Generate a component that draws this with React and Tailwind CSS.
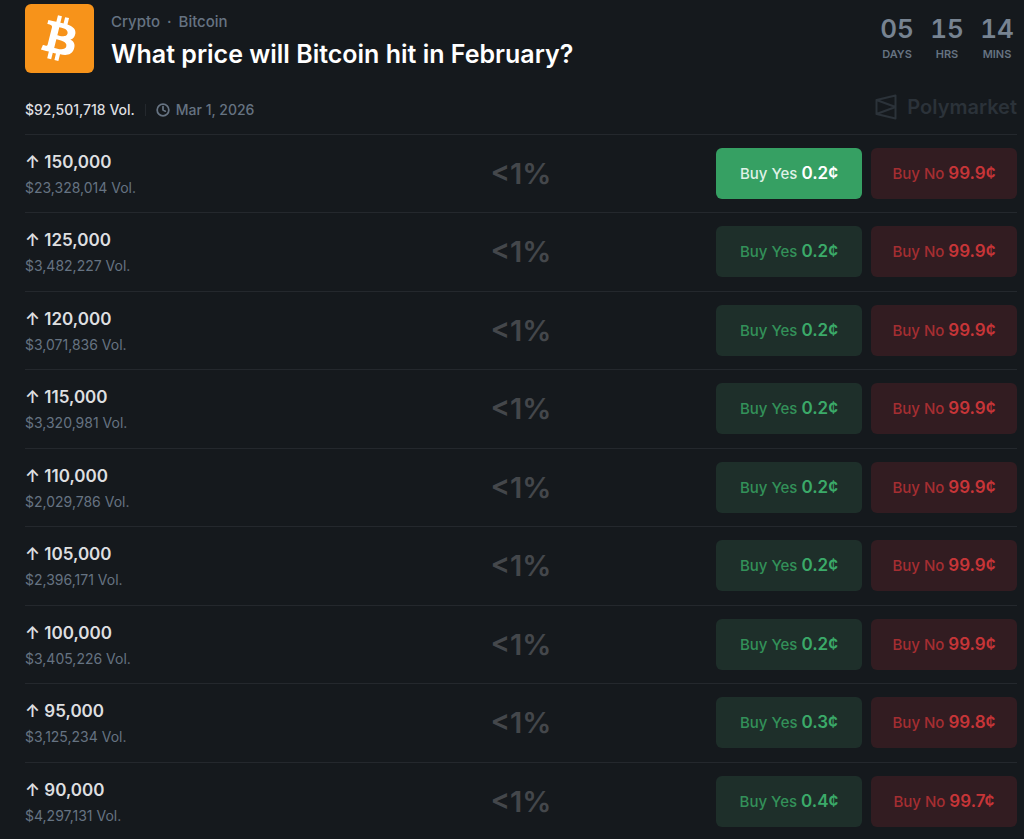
import { Clock } from 'lucide-react';

const countdown = [
  { label: 'Days', value: '05' },
  { label: 'Hrs', value: '15' },
  { label: 'Mins', value: '14' },
];

const outcomes = [
  { target: '150,000', volume: '$23,328,014', yes: '0.2¢', no: '99.9¢', selected: true },
  { target: '125,000', volume: '$3,482,227', yes: '0.2¢', no: '99.9¢' },
  { target: '120,000', volume: '$3,071,836', yes: '0.2¢', no: '99.9¢' },
  { target: '115,000', volume: '$3,320,981', yes: '0.2¢', no: '99.9¢' },
  { target: '110,000', volume: '$2,029,786', yes: '0.2¢', no: '99.9¢' },
  { target: '105,000', volume: '$2,396,171', yes: '0.2¢', no: '99.9¢' },
  { target: '100,000', volume: '$3,405,226', yes: '0.2¢', no: '99.9¢' },
  { target: '95,000', volume: '$3,125,234', yes: '0.3¢', no: '99.8¢' },
  { target: '90,000', volume: '$4,297,131', yes: '0.4¢', no: '99.7¢' },
];

const BitcoinLogo = () => (
  <svg viewBox="0.5 0.4 23 23" className="size-[69px] shrink-0 rounded-md bg-[#f7931a]" aria-hidden="true">
    <path
      fill="#fff"
      d="M17.288 10.291c.24-1.59-.974-2.45-2.64-3.03l.54-2.153-1.315-.33-.525 2.107c-.345-.087-.705-.167-1.064-.25l.526-2.127-1.32-.33-.54 2.165c-.285-.067-.565-.132-.84-.2l-1.815-.45-.35 1.407s.975.225.955.236c.535.136.63.486.615.766l-1.477 5.92c-.075.166-.24.406-.614.314.015.02-.96-.24-.96-.24l-.66 1.51 1.71.426.93.242-.54 2.19 1.32.327.54-2.17c.36.1.705.19 1.05.273l-.51 2.154 1.32.33.545-2.19c2.24.427 3.93.257 4.64-1.774.57-1.637-.03-2.58-1.217-3.196.854-.193 1.5-.76 1.68-1.93h.01zm-3.01 4.22c-.404 1.64-3.157.75-4.05.53l.72-2.9c.896.23 3.757.67 3.33 2.37zm.41-4.24c-.37 1.49-2.662.735-3.405.55l.654-2.64c.744.18 3.137.524 2.75 2.084v.006z"
    />
  </svg>
);

const PolymarketLogo = () => (
  <svg viewBox="0 0 22 26" className="h-[26px] w-[22px]" fill="none" stroke="currentColor" strokeWidth="2" strokeLinejoin="round" aria-hidden="true">
    <path d="M1.5 6 20.5 1.5v23L1.5 20zM1.5 6 20.5 13 1.5 20" />
  </svg>
);

const OutcomeRow = ({ target, volume, yes, no, selected }) => (
  <li className="grid grid-cols-[1fr_auto_1fr] items-center border-t border-[#24282d] pt-[13px] pb-[13px] even:pb-3.5 last:pb-[11px]">
    <div>
      <h2 className="text-[17px] leading-6 font-semibold text-[#dedfe0]">↑ {target}</h2>
      <p className="mt-1 text-sm leading-5 text-[#667382]">{volume} Vol.</p>
    </div>
    <p className="text-[29px] leading-9 font-semibold text-[#44474b]">&lt;1%</p>
    <div className="flex justify-end gap-[9px]">
      <button
        type="button"
        className={`h-[51px] w-[146px] rounded-md text-[15px] font-medium ${
          selected ? 'bg-[#36a063] text-[#dff1e6]' : 'bg-[#1e2f2a] text-[#339159]'
        }`}
      >
        Buy Yes <span className={`text-[17px] font-semibold ${selected ? 'text-white' : 'text-[#3baa69]'}`}>{yes}</span>
      </button>
      <button type="button" className="h-[51px] w-[146px] rounded-md bg-[#321c21] text-[15px] font-medium text-[#a52e32]">
        Buy No <span className="text-[17px] font-semibold text-[#c73538]">{no}</span>
      </button>
    </div>
  </li>
);

export default function App() {
  return (
    <main className="min-h-screen bg-[#15191d] pr-[7px] pl-[25px] font-['Inter',sans-serif]">
      <header className="flex items-start justify-between pt-1">
        <div className="flex gap-[17px]">
          <BitcoinLogo />
          <div className="pt-2">
            <nav className="flex gap-[7px] text-[15px] leading-5 font-medium text-[#667382]">
              <a href="#crypto">Crypto</a>
              <span>·</span>
              <a href="#bitcoin">Bitcoin</a>
            </nav>
            <h1 className="mt-1.5 text-[25px] leading-8 font-semibold text-white">What price will Bitcoin hit in February?</h1>
          </div>
        </div>
        <dl className="flex gap-2.5 pt-2">
          {countdown.map(({ label, value }) => (
            <div key={label} className="flex w-10 flex-col-reverse items-center">
              <dt className="text-[11px] leading-4 font-semibold text-[#667382] uppercase">{label}</dt>
              <dd className="text-[26px] leading-[34px] font-semibold text-[#778391] tabular-nums">{value}</dd>
            </div>
          ))}
        </dl>
      </header>

      <div className="mt-5 mb-[13px] flex h-7 items-end justify-between">
        <div className="flex items-center text-sm leading-[22px] font-medium">
          <span className="text-[#dedfe0]">$92,501,718 Vol.</span>
          <span className="mx-2.5 h-3 w-px bg-[#24282d]" />
          <span className="flex items-center gap-1.5 text-[#667382]">
            <Clock size={14} strokeWidth={3} />
            Mar 1, 2026
          </span>
        </div>
        <div className="flex items-center gap-2.5 text-[#2b3239]">
          <PolymarketLogo />
          <span className="text-xl leading-7 font-semibold">Polymarket</span>
        </div>
      </div>

      <ul>
        {outcomes.map((outcome) => (
          <OutcomeRow key={outcome.target} {...outcome} />
        ))}
      </ul>
    </main>
  );
}
